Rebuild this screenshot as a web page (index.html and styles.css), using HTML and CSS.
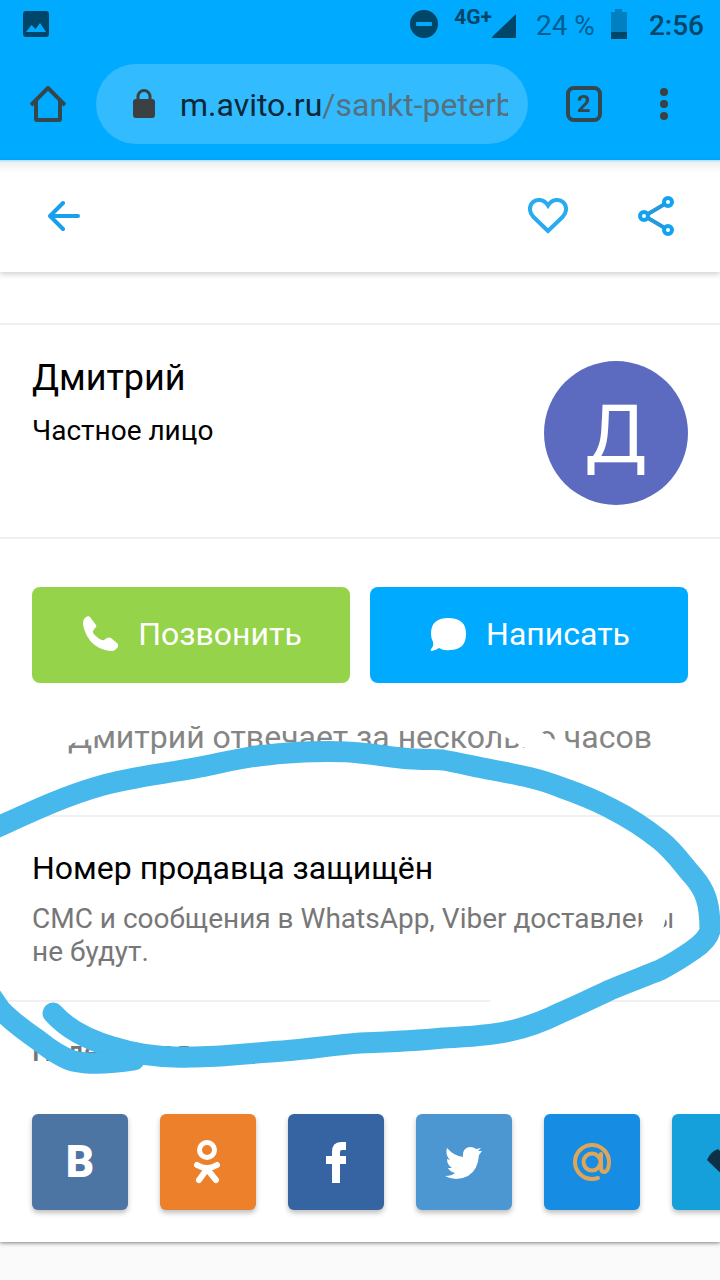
FILE: index.html
```html
<!DOCTYPE html>
<html lang="ru">
<head>
<meta charset="utf-8">
<meta name="viewport" content="width=device-width, initial-scale=1">
<title>Avito — Дмитрий</title>
<link rel="stylesheet" href="styles.css">
</head>
<body>
<div class="screen">
  <div class="browser">
    <div class="status">
      <svg class="status-photo" width="26" height="26" viewBox="0 0 26 26" aria-hidden="true"><rect width="26" height="26" rx="3" fill="#004668"/><path d="M3 21l5.500-7 4 4 4.500-6L23 21z" fill="#0af"/></svg>
      <svg class="status-dnd" width="28" height="28" viewBox="0 0 28 28" aria-hidden="true"><circle cx="14" cy="14" r="14" fill="#004668"/><rect x="6" y="12" width="16" height="4" rx="1" fill="#0af"/></svg>
      <span class="network">4G+</span>
      <svg class="status-signal" width="24" height="24" viewBox="0 0 24 24" aria-hidden="true"><path d="M24 0v24H1q-2 0 0-2z" fill="#004668"/></svg>
      <span class="percent">24 %</span>
      <svg class="status-battery" width="18" height="30" viewBox="0 0 18 30" aria-hidden="true"><path d="M5 0h7v3h5v21H1V3h4z" fill="#0080c0"/><path d="M1 23h16v7H1z" fill="#004668"/></svg>
      <span class="clock">2:56</span>
    </div>
    <div class="toolbar">
      <button class="tool" type="button" aria-label="Домой"><svg width="36" height="36" viewBox="0 0 36 36" fill="none" stroke="#34474f" stroke-width="4"><path d="M6 14v19q0 1 1 1h22q1 0 1-1V14"/><path d="M1 19L18 2l17 17" stroke-linejoin="round"/></svg></button>
      <button class="omnibox" type="button">
        <svg width="24" height="30" viewBox="0 0 24 30" aria-hidden="true"><path d="M6 12V7.500a6 6 0 0 1 12 0V12" fill="none" stroke="#3c4043" stroke-width="3"/><rect x="1" y="10" width="22" height="19" rx="3" fill="#3c4043"/></svg>
        <span class="url">m.avito.ru<span class="url-path">/sankt-peterb</span></span>
      </button>
      <button class="tool" type="button" aria-label="Вкладки"><span class="tabs">2</span></button>
      <button class="tool menu" type="button" aria-label="Меню"><svg width="8" height="32" viewBox="0 0 8 32" fill="#3c4043"><circle cx="4" cy="4" r="4"/><circle cx="4" cy="16" r="4"/><circle cx="4" cy="28" r="4"/></svg></button>
    </div>
  </div>

  <header class="page-header">
    <button class="icon-button" type="button" aria-label="Назад"><svg width="32" height="32" viewBox="0 0 32 32" fill="none" stroke="#1a9fea" stroke-width="4" stroke-linecap="round" stroke-linejoin="round"><path d="M15 3L2 16l13 13M3 16h27"/></svg></button>
    <div class="header-actions">
      <button class="icon-button" type="button" aria-label="В избранное"><svg width="40" height="40" viewBox="0 0 40 40" fill="none" stroke="#29abf0" stroke-width="4"><path d="M20 35L5 20.500C1 16 1 10 4.500 6.500C8.500 2.500 16 3 20 9.500C24 3 31.500 2.500 35.500 6.500C39 10 39 16 35 20.500z"/></svg></button>
      <button class="icon-button" type="button" aria-label="Поделиться"><svg width="36" height="40" viewBox="0 0 36 40" fill="none" stroke="#11a3f2" stroke-width="4"><circle cx="6" cy="20" r="4"/><circle cx="30" cy="6" r="4"/><circle cx="30" cy="34" r="4"/><path d="M10 18L26 8.500M10 22l16 9.500" stroke="#2599de"/></svg></button>
    </div>
  </header>

  <main class="content">
    <section class="seller">
      <div class="seller-info">
        <h1 class="seller-name">Дмитрий</h1>
        <p class="seller-type">Частное лицо</p>
      </div>
      <div class="avatar">Д</div>
    </section>

    <section class="contact">
      <div class="contact-buttons">
        <button class="action call" type="button"><svg width="36" height="36" viewBox="0 0 36 36" fill="#fff" aria-hidden="true"><path d="M3 2C5 0 7 0 8 1L14 9q1 2-1 3l-2 3Q10 17 15 21q5 4 7 3l3-2q2-1 4 0l7 6q2 1 0 3l-3 3q-2 2-10 0Q11 31 5 20Q-1 8 2 3z"/></svg>Позвонить</button>
        <button class="action write" type="button"><svg width="36" height="36" viewBox="0 0 36 36" fill="#fff" aria-hidden="true"><path d="M18 2C30 2 36 7 36 18S30 34 20 34Q14 35 9 32Q6 34 2 35Q0 35 1 33Q4 30 3 26Q1 22 1 18C1 7 7 2 18 2z"/></svg>Написать</button>
      </div>
      <p class="response">Дмитрий отвечает за несколько часов</p>
    </section>

    <section class="protect">
      <h2 class="protect-title">Номер продавца защищён</h2>
      <p class="protect-text">СМС и сообщения в WhatsApp, Viber доставлены не будут.</p>
    </section>

    <section class="share">
      <h3 class="share-title">Поделиться</h3>
      <div class="social">
        <a class="tile vk" href="#" aria-label="ВКонтакте"><span class="vk-letter">B</span></a>
        <a class="tile ok" href="#" aria-label="Одноклассники"><svg width="28" height="46" viewBox="0 0 28 46" fill="none" stroke="#fff" stroke-linecap="round"><circle cx="13" cy="11" r="7.500" stroke-width="5"/><path d="M3 26q10 6 20 0M13 30l-8 11M13 30l9 11" stroke-width="6"/></svg></a>
        <a class="tile fb" href="#" aria-label="Facebook"><svg width="22" height="42" viewBox="0 0 22 42" fill="#fff"><path d="M7 42V23H1v-8h6V11Q7 1 16 1h5v8h-4q-2 0-2 2v4h6v8h-6v19z"/></svg></a>
        <a class="tile tw" href="#" aria-label="Twitter"><svg width="38" height="34" viewBox="0 0 38 34" fill="#fff"><path d="M2 3Q9 11 18 12Q17 3 25 2Q29 2 31 4L36 3L33 6L37 6L34 10Q33 25 23 31Q11 37 0 31Q7 31 10 28Q5 27 3 23H7Q2 20 2 14L5 15Q0 10 2 3z"/></svg></a>
        <a class="tile mail" href="#" aria-label="Mail.ru"><svg width="38" height="38" viewBox="0 0 38 38" fill="none" stroke="#dfa559" stroke-width="4" stroke-linecap="round"><circle cx="19" cy="19" r="8.500"/><path d="M28 11v14q0 4 4 4q4-2 4-10A17 17 0 1 0 19 36q3 0 6-1"/></svg></a>
        <a class="tile lj" href="#" aria-label="LiveJournal"><svg width="42" height="42" viewBox="0 0 42 42"><path d="M8 19Q11 11 19 8L40 29V41L32 42z" fill="#0e3245"/></svg></a>
      </div>
    </section>
  </main>

  <svg class="marker" viewBox="0 0 720 1280" fill="none" stroke-linecap="round" stroke-linejoin="round" aria-hidden="true">
    <g stroke="#fff" stroke-width="22">
      <path d="M60 735L84 729L102 722"/>
      <path d="M488 714L578 766"/>
      <path d="M655 898Q657 925 647 935Q600 980 501 1001H565"/>
    </g>
    <g stroke="#46b8eb" stroke-width="21">
      <path d="M-20 835L0 826C35 810 65 796 100 786C135 776 165 774 200 767C225 762 243 757 267 755C290 752 335 750 360 753C380 755 395 758 413 759C430 760 435 759 443 760C460 763 476 767 493 770C520 775 540 779 560 787C580 794 595 800 610 808C630 818 645 828 660 840C674 851 684 866 693 876C705 890 710 902 710 930C709 936 702 944 693 950C683 957 672 964 660 970C643 977 626 983 610 990C593 998 577 1006 560 1013C544 1021 528 1027 510 1031C488 1036 466 1037 443 1038C415 1041 388 1042 360 1043C334 1045 309 1049 283 1051C252 1053 221 1057 190 1057C164 1058 138 1055 113 1047C92 1041 68 1030 53 1013"/>
      <path d="M-20 980L0 1009C12 1022 25 1031 38 1040C48 1048 60 1057 73 1061C91 1065 115 1063 134 1060"/>
    </g>
  </svg>
</div>
</body>
</html>
```
FILE: styles.css
```css
* { box-sizing: border-box; }

body {
  margin: 0;
  background: #fafafa;
  color: #000;
  font-family: Roboto, "Noto Sans", sans-serif;
}

h1, h2, h3, p { margin: 0; font-weight: 400; }

button {
  border: 0;
  padding: 0;
  background: none;
  font: inherit;
  color: inherit;
}

svg { display: block; flex: none; }

.screen {
  position: relative;
  min-height: 100vh;
  overflow: hidden;
}

.browser { background: #0af; }

.status {
  display: flex;
  align-items: center;
  height: 48px;
  padding: 0 16px 0 23px;
  color: #004668;
  font-size: 28px;
}

.status-photo { margin-right: auto; }
.network { margin: 0 0 14px 16px; font-size: 21px; font-weight: 700; line-height: 20px; }
.status-signal { margin-top: 4px; }
.percent { margin: 2px 15px 0 20px; color: #005f90; }
.clock { margin: 2px 0 0 21px; font-weight: 500; }

.toolbar {
  display: flex;
  align-items: center;
  height: 112px;
}

.tool {
  display: flex;
  flex: none;
  align-items: center;
  justify-content: center;
  width: 96px;
  height: 80px;
}

.omnibox {
  display: flex;
  flex: 1;
  align-items: center;
  gap: 24px;
  min-width: 0;
  height: 80px;
  margin-right: 8px;
  padding: 0 20px 0 36px;
  border-radius: 40px;
  background: #33bbff;
  color: #0b2836;
  font-size: 32px;
  text-align: left;
}

.url { flex: 1; padding-top: 2px; overflow: hidden; white-space: nowrap; }
.url-path { color: #56707d; }

.tabs {
  width: 36px;
  height: 36px;
  border: 4px solid #34474f;
  border-radius: 8px;
  color: #34474f;
  font-size: 24px;
  font-weight: 700;
  line-height: 29px;
}

.menu { width: 64px; margin-right: 24px; }

.page-header {
  position: relative;
  display: flex;
  align-items: center;
  justify-content: space-between;
  height: 112px;
  padding: 0 46px 0 48px;
  background: linear-gradient(#b3e6ff 0, #b3e6ff 1px, #eee 2px, #f7f9fb 8px, #fff 14px);
  box-shadow: 0 2px 6px rgba(0, 0, 0, 0.2);
}

.header-actions { display: flex; align-items: center; gap: 70px; }

.content {
  padding-top: 51px;
  background: #fff;
  box-shadow: 0 1px 4px rgba(0, 0, 0, 0.5);
}

.seller {
  display: flex;
  justify-content: space-between;
  padding: 36px 32px 32px;
  border-top: 2px solid #f0f0f0;
}

.seller-name { font-size: 36px; line-height: 34px; }
.seller-type { margin-top: 18px; font-size: 28px; line-height: 36px; }

.avatar {
  width: 144px;
  height: 144px;
  border-radius: 50%;
  background: #5c6bc0;
  color: #fff;
  font-family: "Noto Sans", "Open Sans", sans-serif;
  font-size: 80px;
  line-height: 140px;
  text-align: center;
}

.contact {
  padding: 48px 32px 60px;
  border-top: 2px solid #f0f0f0;
}

.contact-buttons { display: grid; grid-template-columns: 1fr 1fr; gap: 20px; }

.action {
  display: flex;
  align-items: center;
  justify-content: center;
  gap: 20px;
  height: 96px;
  padding: 0 0 2px 2px;
  border-radius: 8px;
  color: #fff;
  font-size: 32px;
}

.call { background: #94d34a; }
.write { background: #0af; }

.response {
  margin-top: 36px;
  color: #858585;
  font-size: 32px;
  line-height: 36px;
  text-align: center;
}

.protect {
  padding: 32px;
  border-top: 2px solid #f0f0f0;
}

.protect-title { font-size: 32px; line-height: 38px; }

.protect-text {
  margin-top: 15px;
  color: #777;
  font-size: 28px;
  line-height: 33px;
}

.share {
  padding: 32px 0 32px 32px;
  border-top: 2px solid #f0f0f0;
}

.share-title { color: #757575; font-size: 28px; font-weight: 500; line-height: 36px; }

.social {
  display: flex;
  gap: 32px;
  margin-top: 44px;
}

.tile {
  display: flex;
  flex: none;
  align-items: center;
  justify-content: center;
  width: 96px;
  height: 96px;
  border-radius: 6px;
  box-shadow: 0 3px 5px rgba(0, 0, 0, 0.25);
  color: #fff;
  text-decoration: none;
}

.vk { background: #4d75a3; }
.ok { background: #ed812b; }
.fb { background: #3664a2; }
.tw { background: #4c97d2; }
.mail { background: #168de2; }
.lj { background: #15a0db; }

.vk-letter { font-size: 44px; font-weight: 900; line-height: 94px; }

.marker {
  position: absolute;
  top: 0;
  left: 0;
  width: 100%;
  pointer-events: none;
}
```
